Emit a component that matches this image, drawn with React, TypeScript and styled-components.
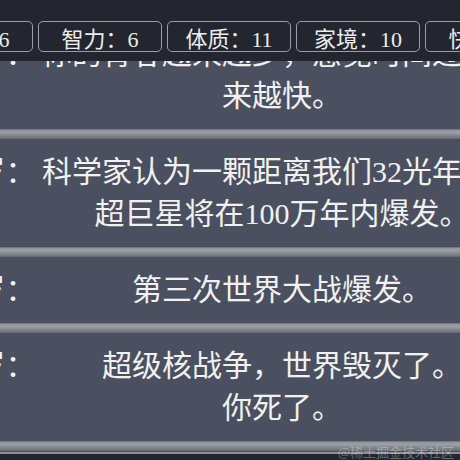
import React from 'react';
import styled, {createGlobalStyle} from 'styled-components';

// Notes: life trajectory view, scrolled so the first event sits under the header.

const GlobalStyle = createGlobalStyle`
  html, body {
    margin: 0;
    padding: 0;
    background: #23262f;
  }
  body {
    font-family: "Liberation Serif", "Noto Sans CJK SC", serif;
    color: #f1f1f1;
  }
`;

const Page = styled.div`
  position: relative;
  width: 460px;
  height: 460px;
  display: flex;
  flex-direction: column;
  overflow: hidden;
  background: #23262f;
`;

const Header = styled.div`
  flex: none;
  height: 61px;
  box-sizing: border-box;
  padding-top: 21px;
  background: #23262f;
  overflow: hidden;
  position: relative;
  z-index: 1;
`;

const StatRow = styled.div`
  display: flex;
  gap: 5px;
  margin-left: -91px;
`;

const Stat = styled.div`
  flex: none;
  width: 124px;
  height: 31px;
  box-sizing: border-box;
  border: 1px solid #9b9ea4;
  border-radius: 5px;
  display: flex;
  align-items: center;
  justify-content: center;
  font-size: 22px;
  color: #ececec;
  white-space: nowrap;
`;

const Viewport = styled.div`
  flex: 1;
  overflow: hidden;
  background: #4a5060;
`;

const List = styled.ul`
  list-style: none;
  margin: -40px 0 0 -62px;
  padding: 0;
  width: 600px;
`;

const Item = styled.li`
  display: flex;
  padding: 12px 0;
  font-size: 30px;
  line-height: 42px;
  background: #4a5060;
`;

const Age = styled.span`
  flex: none;
  width: 92px;
  margin-right: 10px;
  text-align: right;
  white-space: nowrap;
`;

const Text = styled.span`
  flex: none;
  width: 484px;
  text-align: center;
`;

const Line = styled.span`
  display: block;
  white-space: nowrap;
`;

const Bar = styled.li`
  height: 10px;
  background: linear-gradient(
    to bottom,
    #686c74 0%,
    #92959b 15%,
    #9c9fa4 35%,
    #878a90 60%,
    #75787e 85%,
    #63666e 100%
  );
`;

const Footer = styled.div`
  flex: none;
  height: 6px;
  border-top: 2px solid #8d9096;
  background: #23262f;
`;

const Watermark = styled.div`
  position: absolute;
  right: 6px;
  bottom: 0px;
  font-family: "Noto Sans CJK SC", sans-serif;
  font-size: 13px;
  line-height: 16px;
  color: rgba(255, 255, 255, 0.32);
  z-index: 2;
`;

const stats = ['颜值：6', '智力：6', '体质：11', '家境：10', '快乐：7'];

const events = [
  {age: '12 岁：', lines: ['你的青春越来越少，感觉时间过得越', '来越快。']},
  {age: '13 岁：', lines: ['科学家认为一颗距离我们32光年外的', '超巨星将在100万年内爆发。']},
  {age: '14 岁：', lines: ['第三次世界大战爆发。']},
  {age: '15 岁：', lines: ['超级核战争，世界毁灭了。', '你死了。']},
];

const App: React.FC = () => {
  return (
    <Page>
      <GlobalStyle />
      <Header>
        <StatRow>
          {stats.map(s => (
            <Stat key={s}>{s}</Stat>
          ))}
        </StatRow>
      </Header>
      <Viewport>
        <List>
          {events.map(e => (
            <React.Fragment key={e.age}>
              <Item>
                <Age>{e.age}</Age>
                <Text>
                  {e.lines.map(l => (
                    <Line key={l}>{l}</Line>
                  ))}
                </Text>
              </Item>
              <Bar />
            </React.Fragment>
          ))}
        </List>
      </Viewport>
      <Footer />
      <Watermark>@稀土掘金技术社区</Watermark>
    </Page>
  );
};

export default App;
